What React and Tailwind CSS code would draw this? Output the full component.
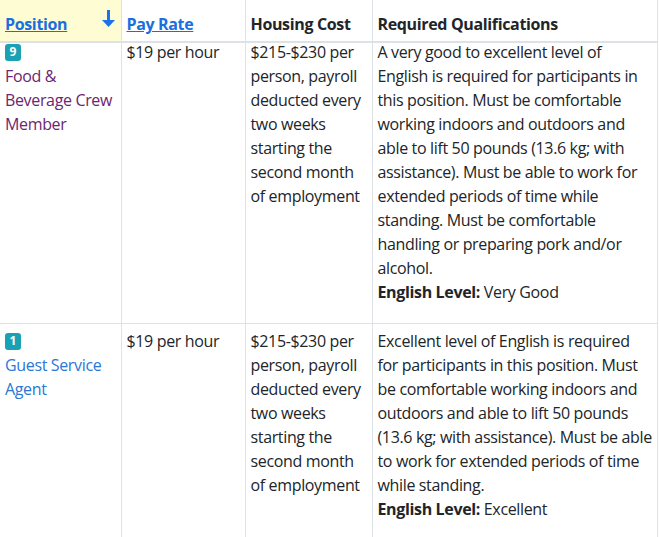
import React from 'react';

const rows = [
    {
        badge: '9',
        title: 'Food & Beverage Crew Member',
        visited: true,
        pay: '$19 per hour',
        housing: '$215-$230 per person, payroll deducted every two weeks starting the second month of employment',
        quals: 'A very good to excellent level of English is required for participants in this position. Must be comfortable working indoors and outdoors and able to lift 50 pounds (13.6 kg; with assistance). Must be able to work for extended periods of time while standing. Must be comfortable handling or preparing pork and/or alcohol.',
        level: 'Very Good',
    },
    {
        badge: '1',
        title: 'Guest Service Agent',
        visited: false,
        pay: '$19 per hour',
        housing: '$215-$230 per person, payroll deducted every two weeks starting the second month of employment',
        quals: 'Excellent level of English is required for participants in this position. Must be comfortable working indoors and outdoors and able to lift 50 pounds (13.6 kg; with assistance). Must be able to work for extended periods of time while standing.',
        level: 'Excellent',
    },
];

function SortArrow() {
    return (
        <svg width="13" height="17" viewBox="0 0 13 17" className="absolute right-[6px] top-[10px]">
            <path d="M5 0h3v10h5l-6.5 7L0 10h5z" fill="#1a73e8" />
        </svg>
    );
}

export default function App() {
    return (
        <div className="w-[659px] h-[537px] overflow-hidden bg-white text-[#212529] text-[16px] leading-[24px] font-['Open_Sans',sans-serif] tracking-[-0.35px]">
            <table className="table-fixed border-collapse w-[657px]">
                <colgroup>
                    <col className="w-[121px]" />
                    <col className="w-[124px]" />
                    <col className="w-[127px]" />
                    <col className="w-[285px]" />
                </colgroup>
                <thead>
                    <tr className="h-[42px] border-b-2 border-[#dee2e6]">
                        <th className="relative bg-[#fefcd2] text-left align-bottom pl-[5px] pr-1 pb-[5px] font-bold border-r border-[#dee2e6]">
                            <a className="text-[#1a6fdf] underline">Position</a>
                            <SortArrow />
                        </th>
                        <th className="text-left align-bottom px-[5px] pb-[5px] font-bold border-r border-[#dee2e6]">
                            <a className="text-[#1a6fdf] underline">Pay Rate</a>
                        </th>
                        <th className="text-left align-bottom px-[5px] pb-[5px] font-bold border-r border-[#dee2e6]">
                            Housing Cost
                        </th>
                        <th className="text-left align-bottom pl-[5px] pr-[3px] pb-[5px] font-bold border-r border-[#dee2e6]">
                            Required Qualifications
                        </th>
                    </tr>
                </thead>
                <tbody>
                    {rows.map((row, i) => (
                        <tr key={row.badge} className="border-b border-[#dee2e6] align-top">
                            <td className={i === 0 ? 'pl-[5px] pr-1 pt-0 pb-[19px] border-r border-[#dee2e6]' : 'pl-[5px] pr-1 pt-[5px] pb-[40px] border-r border-[#dee2e6]'}>
                                <div className={i === 0 ? '-mt-[3px]' : ''}>
                                    <div className="h-[24px] flex items-center">
                                        <span className="w-[16px] h-[17px] rounded-[3px] bg-[#1aa1b4] text-white text-[12px] font-bold leading-none flex items-center justify-center tracking-normal">
                                            {row.badge}
                                        </span>
                                    </div>
                                    <a className={row.visited ? 'text-[#6c256f]' : 'text-[#2a78d6]'}>{row.title}</a>
                                </div>
                            </td>
                            <td className={i === 0 ? 'px-[5px] pt-0 border-r border-[#dee2e6]' : 'px-[5px] pt-[5px] border-r border-[#dee2e6]'}>
                                <div className={i === 0 ? '-mt-[3px]' : ''}>{row.pay}</div>
                            </td>
                            <td className={i === 0 ? 'px-[5px] pt-0 border-r border-[#dee2e6]' : 'px-[5px] pt-[5px] border-r border-[#dee2e6]'}>
                                <div className={i === 0 ? '-mt-[3px]' : ''}>{row.housing}</div>
                            </td>
                            <td className={i === 0 ? 'pl-[5px] pr-[3px] pt-0 pb-[19px] border-r border-[#dee2e6]' : 'pl-[5px] pr-[3px] pt-[5px] pb-[40px] border-r border-[#dee2e6]'}>
                                <div className={i === 0 ? '-mt-[3px]' : ''}>
                                    {row.quals}
                                    <div>
                                        <span className="font-bold">English Level:</span> {row.level}
                                    </div>
                                </div>
                            </td>
                        </tr>
                    ))}
                </tbody>
            </table>
        </div>
    );
}
